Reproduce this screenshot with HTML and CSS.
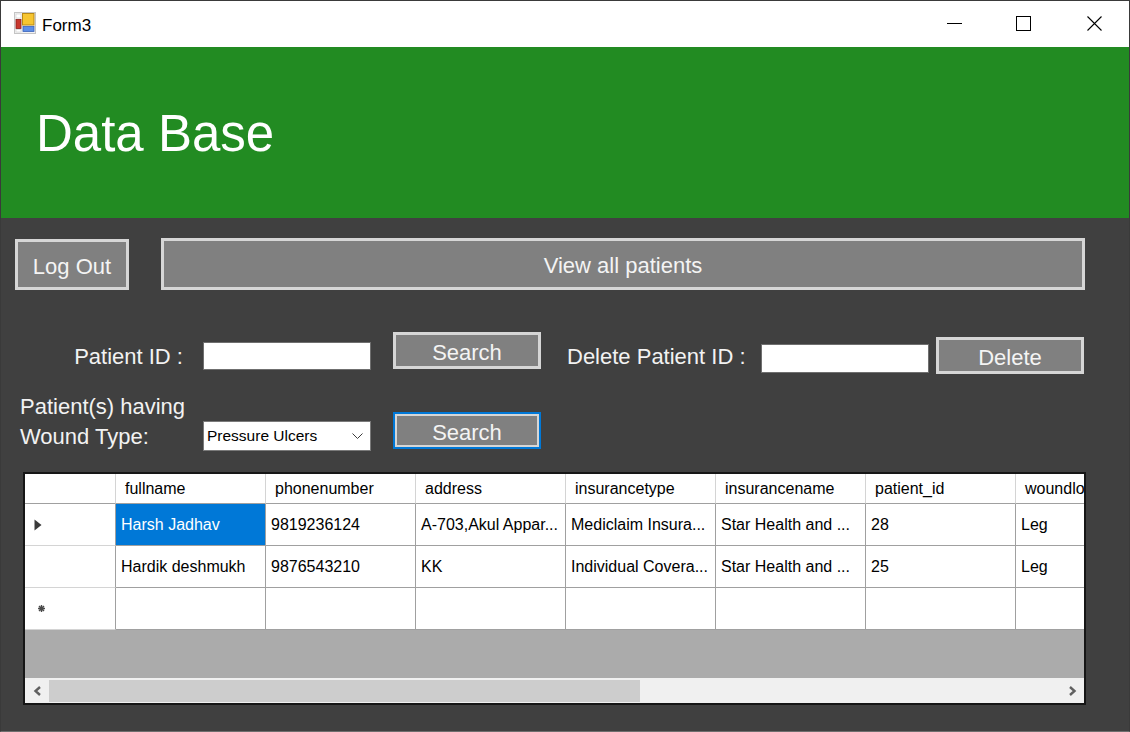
FILE: index.html
```html
<!DOCTYPE html>
<html lang="en">
<head>
<meta charset="utf-8">
<title>Form3</title>
<link rel="stylesheet" href="styles.css">
</head>
<body>
<div class="window">
  <div class="titlebar">
    <svg class="app-icon" width="22" height="22" viewBox="0 0 22 22">
      <rect x="0.5" y="0.5" width="21" height="21" fill="#f2f2f2" stroke="#c4c4c4"/>
      <rect x="2" y="2" width="5" height="4" fill="#fff" stroke="#cccccc" stroke-width="0.6"/>
      <rect x="2" y="7.5" width="5" height="9" fill="#c8382e" stroke="#8a1f1a" stroke-width="0.8"/>
      <rect x="8.5" y="1.5" width="11.5" height="11.5" fill="#f6c530" stroke="#b98914"/>
      <rect x="9" y="14.5" width="11" height="5" fill="#5d8ee6" stroke="#3a63b8" stroke-width="0.8"/>
      <rect x="2" y="17.5" width="5" height="2.5" fill="#fff" stroke="#cccccc" stroke-width="0.6"/>
    </svg>
    <span class="title">Form3</span>
    <div class="controls">
      <svg class="ctl-icon ctl-min" width="15" height="15" viewBox="0 0 15 15"><line x1="0" y1="7.5" x2="15" y2="7.5" stroke="#000" stroke-width="1"/></svg>
      <svg class="ctl-icon ctl-max" width="15" height="15" viewBox="0 0 15 15"><rect x="0.5" y="0.5" width="14" height="14" fill="none" stroke="#000" stroke-width="1"/></svg>
      <svg class="ctl-icon ctl-close" width="15" height="15" viewBox="0 0 15 15"><path d="M0.5 0.5 L14.5 14.5 M14.5 0.5 L0.5 14.5" stroke="#000" stroke-width="1.1" fill="none"/></svg>
    </div>
  </div>

  <div class="banner">
    <h1 class="banner-title">Data Base</h1>
  </div>

  <div class="content">
    <div class="row-top">
      <button class="btn btn-logout">Log Out</button>
      <button class="btn btn-view">View all patients</button>
    </div>

    <div class="row-a">
      <label class="lbl lbl-pid">Patient ID :</label>
      <div class="textbox tb-pid"></div>
      <button class="btn btn-search1">Search</button>
      <label class="lbl lbl-del">Delete Patient ID :</label>
      <div class="textbox tb-del"></div>
      <button class="btn btn-delete">Delete</button>
    </div>

    <div class="row-b">
      <label class="lbl lbl-wound">Patient(s) having<br>Wound Type:</label>
      <div class="combo">
        <span class="combo-text">Pressure Ulcers</span>
        <svg class="combo-arrow" width="11" height="6" viewBox="0 0 11 6"><path d="M0.5 0.5 L5.5 5.5 L10.5 0.5" fill="none" stroke="#3c3c3c" stroke-width="1"/></svg>
      </div>
      <button class="btn btn-search2">Search</button>
    </div>

    <div class="dgv">
      <div class="dgv-row dgv-head">
        <div class="cell rowhead corner"></div>
        <div class="cell hcell">fullname</div>
        <div class="cell hcell">phonenumber</div>
        <div class="cell hcell">address</div>
        <div class="cell hcell">insurancetype</div>
        <div class="cell hcell">insurancename</div>
        <div class="cell hcell">patient_id</div>
        <div class="cell hcell">woundlocation</div>
      </div>
      <div class="dgv-row dgv-body-row">
        <div class="cell rowhead">
          <svg class="row-arrow" width="8" height="12" viewBox="0 0 8 12"><path d="M0.5 0.5 L7.5 6 L0.5 11.5 Z" fill="#3a3a3a"/></svg>
        </div>
        <div class="cell selected">Harsh Jadhav</div>
        <div class="cell">9819236124</div>
        <div class="cell">A-703,Akul Appar...</div>
        <div class="cell">Mediclaim Insura...</div>
        <div class="cell">Star Health and ...</div>
        <div class="cell">28</div>
        <div class="cell">Leg</div>
      </div>
      <div class="dgv-row dgv-body-row">
        <div class="cell rowhead"></div>
        <div class="cell">Hardik deshmukh</div>
        <div class="cell">9876543210</div>
        <div class="cell">KK</div>
        <div class="cell">Individual Covera...</div>
        <div class="cell">Star Health and ...</div>
        <div class="cell">25</div>
        <div class="cell">Leg</div>
      </div>
      <div class="dgv-row dgv-body-row">
        <div class="cell rowhead">
          <svg class="row-star" width="7" height="7" viewBox="0 0 7 7"><path d="M3.5 0 V7 M0 3.5 H7 M1 1 L6 6 M6 1 L1 6" stroke="#4a4a4a" stroke-width="1.4" fill="none"/></svg>
        </div>
        <div class="cell"></div>
        <div class="cell"></div>
        <div class="cell"></div>
        <div class="cell"></div>
        <div class="cell"></div>
        <div class="cell"></div>
        <div class="cell"></div>
      </div>
      <div class="dgv-fill"></div>
      <div class="hscroll">
        <div class="sb-btn">
          <svg width="9" height="10" viewBox="0 0 9 10"><path d="M7 1 L2.5 5 L7 9" fill="none" stroke="#606060" stroke-width="2.4"/></svg>
        </div>
        <div class="sb-thumb"></div>
        <div class="sb-track"></div>
        <div class="sb-btn">
          <svg width="9" height="10" viewBox="0 0 9 10"><path d="M2 1 L6.5 5 L2 9" fill="none" stroke="#606060" stroke-width="2.4"/></svg>
        </div>
      </div>
    </div>
  </div>
</div>
</body>
</html>
```

FILE: styles.css
```css
* {
  box-sizing: border-box;
}

html,
body {
  margin: 0;
  padding: 0;
}

body {
  width: 1130px;
  height: 732px;
  overflow: hidden;
  background: #404040;
  font-family: "Liberation Sans", Arial, sans-serif;
}

.window {
  width: 1130px;
  height: 732px;
  border: 1px solid #3a3a3a;
  border-bottom-color: #6e6e6e;
  display: flex;
  flex-direction: column;
  background: #404040;
}

/* ---------- title bar ---------- */
.titlebar {
  height: 46px;
  flex: none;
  background: #ffffff;
  display: flex;
  align-items: flex-start;
}

.app-icon {
  flex: none;
  margin: 11px 0 0 13px;
}

.title {
  margin: 15px 0 0 6px;
  font-size: 17px;
  line-height: 20px;
  color: #000;
}

.controls {
  margin-left: auto;
  padding-right: 27px;
  display: flex;
  align-items: flex-start;
}

.ctl-icon {
  flex: none;
  margin-top: 15px;
}

.ctl-max {
  margin-left: 54px;
}

.ctl-close {
  margin-left: 56px;
}

/* ---------- banner ---------- */
.banner {
  height: 171px;
  flex: none;
  background: #228b22;
  padding: 59px 0 0 35px;
}

.banner-title {
  margin: 0;
  font-size: 51px;
  line-height: 56px;
  font-weight: normal;
  color: #ffffff;
}

/* ---------- content ---------- */
.content {
  flex: 1;
  padding: 20px 0 0 14px;
  background: #404040;
}

.btn {
  appearance: none;
  margin: 0;
  padding: 4px 0 0;
  border: 3px solid #d6d6d6;
  background: #808080;
  color: #f4f4f4;
  font-family: "Liberation Sans", Arial, sans-serif;
  font-size: 22px;
  line-height: 24px;
  display: flex;
  align-items: center;
  justify-content: center;
  flex: none;
}

.lbl {
  flex: none;
  color: #f2f2f2;
  font-size: 22px;
  line-height: 26px;
  white-space: nowrap;
}

.textbox {
  flex: none;
  width: 168px;
  background: #ffffff;
  border: 1px solid #6f6f6f;
}

.row-top {
  display: flex;
  align-items: flex-start;
}

.btn-logout {
  width: 114px;
  height: 51px;
  margin-top: 1px;
}

.btn-view {
  width: 924px;
  height: 52px;
  margin-left: 32px;
}

.row-a {
  margin-top: 42px;
  display: flex;
  align-items: flex-start;
}

.lbl-pid {
  width: 168px;
  text-align: right;
  margin-top: 12px;
}

.tb-pid {
  height: 28px;
  margin: 10px 0 0 20px;
}

.btn-search1 {
  width: 148px;
  height: 37px;
  margin-left: 22px;
}

.lbl-del {
  width: 194px;
  margin: 12px 0 0 26px;
}

.tb-del {
  height: 29px;
  margin-top: 12px;
}

.btn-delete {
  width: 148px;
  height: 37px;
  margin: 5px 0 0 7px;
}

.row-b {
  margin-top: 18px;
  display: flex;
  align-items: flex-start;
}

.lbl-wound {
  width: 183px;
  margin-left: 5px;
  line-height: 30px;
}

.combo {
  flex: none;
  width: 168px;
  height: 30px;
  margin-top: 29px;
  background: #ffffff;
  border: 1px solid #7a7a7a;
  display: flex;
  align-items: center;
  padding: 0 7px 0 3px;
}

.combo-text {
  font-size: 15.5px;
  color: #000;
  flex: 1;
}

.combo-arrow {
  flex: none;
}

.btn-search2 {
  width: 148px;
  height: 37px;
  margin: 20px 0 0 22px;
  border: 2px solid #0078d7;
  box-shadow: inset 0 0 0 2px #d6d6d6;
}

/* ---------- data grid ---------- */
.dgv {
  margin: 20px 0 0 8px;
  width: 1063px;
  height: 233px;
  border: 2px solid #161616;
  background: #ababab;
  display: flex;
  flex-direction: column;
  overflow: hidden;
}

.dgv-row {
  display: flex;
  flex: none;
  background: #ffffff;
}

.dgv-head {
  height: 30px;
}

.dgv-body-row {
  height: 42px;
}

.cell {
  flex: none;
  width: 150px;
  height: 100%;
  border-right: 1px solid #a0a0a0;
  border-bottom: 1px solid #a0a0a0;
  display: flex;
  align-items: center;
  padding-left: 5px;
  font-size: 16px;
  color: #000;
  white-space: nowrap;
  overflow: hidden;
}

.hcell {
  padding-left: 9px;
  padding-top: 1px;
  border-right-color: #d4d4d4;
}

.rowhead {
  width: 91px;
  padding-left: 9px;
  border-bottom-color: #d4d4d4;
}

.corner {
  border-bottom-color: #a0a0a0;
  border-right-color: #d4d4d4;
}

.row-star {
  margin-left: 4px;
}

.selected {
  background: #0078d7;
  color: #ffffff;
}

.dgv-fill {
  flex: 1;
  background: #ababab;
}

.hscroll {
  height: 25px;
  flex: none;
  background: #f0f0f0;
  display: flex;
  align-items: flex-start;
}

.sb-btn {
  flex: none;
  width: 24px;
  height: 25px;
  display: flex;
  align-items: center;
  justify-content: center;
}

.sb-thumb {
  flex: none;
  width: 591px;
  height: 22px;
  margin-top: 2px;
  background: #cdcdcd;
}

.sb-track {
  flex: 1;
}
```
